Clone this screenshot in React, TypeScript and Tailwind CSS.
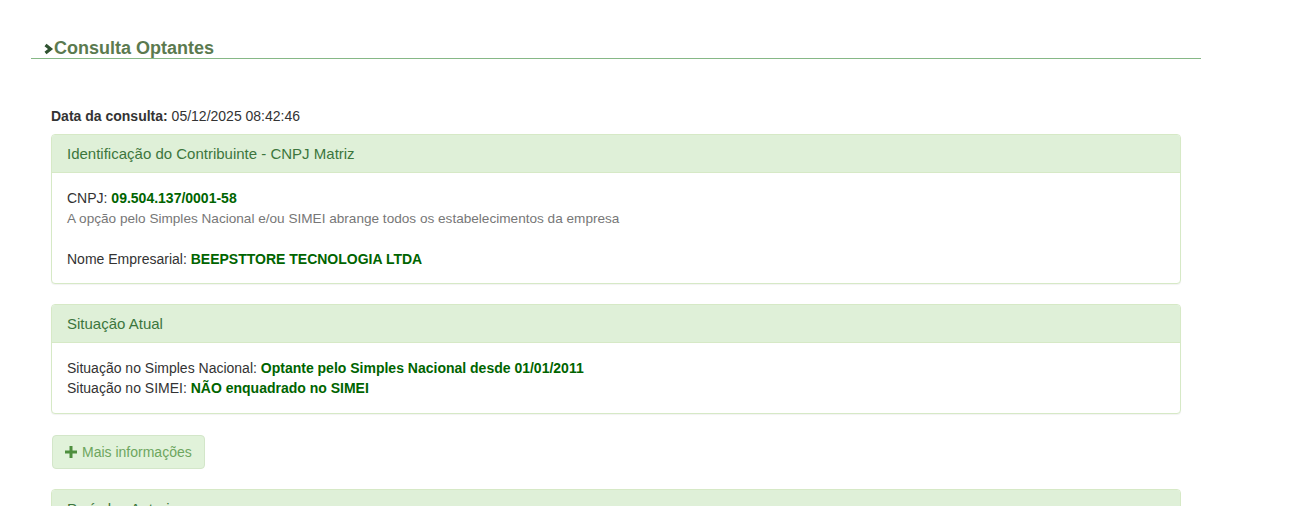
export default function App() {
  return (
    <div className="min-h-[506px] overflow-hidden bg-white font-['Liberation_Sans',Arial,sans-serif] text-[14px] leading-[20px] text-[#333]">
      <div className="ml-[31px] w-[1170px] pt-[38px]">
        <h2 className="flex items-center border-b border-[#86b886] pl-[12px] text-[18px] font-bold leading-[20px] text-[#5b7a4f]">
          <svg width="11" height="12" viewBox="0 0 11 12" className="mt-[2px]">
            <path d="M2.5 2 L7.5 6 L2.5 10" fill="none" stroke="#2f5230" strokeWidth="3.2" />
          </svg>
          Consulta Optantes
        </h2>

        <div className="mx-[20px] mt-[47px]">
          <p className="mb-[8px]">
            <b>Data da consulta:</b> 05/12/2025 08:42:46
          </p>

          <div className="mb-[20px] rounded-[4px] border border-[#d6e9c6] bg-white shadow-[0_1px_1px_rgba(0,0,0,0.05)]">
            <div className="rounded-t-[3px] border-b border-[#d6e9c6] bg-[#dff0d8] px-[15px] py-[10px] text-[15px] leading-[17px] text-[#3c763d]">
              Identificação do Contribuinte - CNPJ Matriz
            </div>
            <div className="px-[15px] pb-[14px] pt-[15px]">
              <div>
                CNPJ: <b className="text-[#006400]">09.504.137/0001-58</b>
              </div>
              <div>
                <small className="text-[13.6px] text-[#777]">
                  A opção pelo Simples Nacional e/ou SIMEI abrange todos os estabelecimentos da empresa
                </small>
              </div>
              <div className="h-[20px]" />
              <div>
                Nome Empresarial: <b className="text-[#006400]">BEEPSTTORE TECNOLOGIA LTDA</b>
              </div>
            </div>
          </div>

          <div className="mb-[21px] rounded-[4px] border border-[#d6e9c6] bg-white shadow-[0_1px_1px_rgba(0,0,0,0.05)]">
            <div className="rounded-t-[3px] border-b border-[#d6e9c6] bg-[#dff0d8] px-[15px] py-[10px] text-[15px] leading-[17px] text-[#3c763d]">
              Situação Atual
            </div>
            <div className="px-[15px] py-[15px]">
              <div>
                Situação no Simples Nacional:{" "}
                <b className="text-[#006400]">Optante pelo Simples Nacional desde 01/01/2011</b>
              </div>
              <div>
                Situação no SIMEI: <b className="text-[#006400]">NÃO enquadrado no SIMEI</b>
              </div>
            </div>
          </div>

          <button className="mb-[20px] ml-[1px] flex h-[34px] items-center gap-[5px] rounded-[4px] border border-[#d3e6c9] bg-[#e1f2da] px-[12px] text-[#6da65e]">
            <svg width="12" height="12" viewBox="0 0 12 12">
              <path d="M4.5 0h3v4.5H12v3H7.5V12h-3V7.5H0v-3h4.5z" fill="#4e8f3e" />
            </svg>
            Mais informações
          </button>

          <div className="rounded-[4px] border border-[#d6e9c6] bg-white">
            <div className="rounded-t-[3px] border-b border-[#d6e9c6] bg-[#dff0d8] px-[15px] py-[10px] text-[15px] leading-[17px] text-[#3c763d]">
              Períodos Anteriores
            </div>
            <div className="h-[60px]" />
          </div>
        </div>
      </div>
    </div>
  );
}
